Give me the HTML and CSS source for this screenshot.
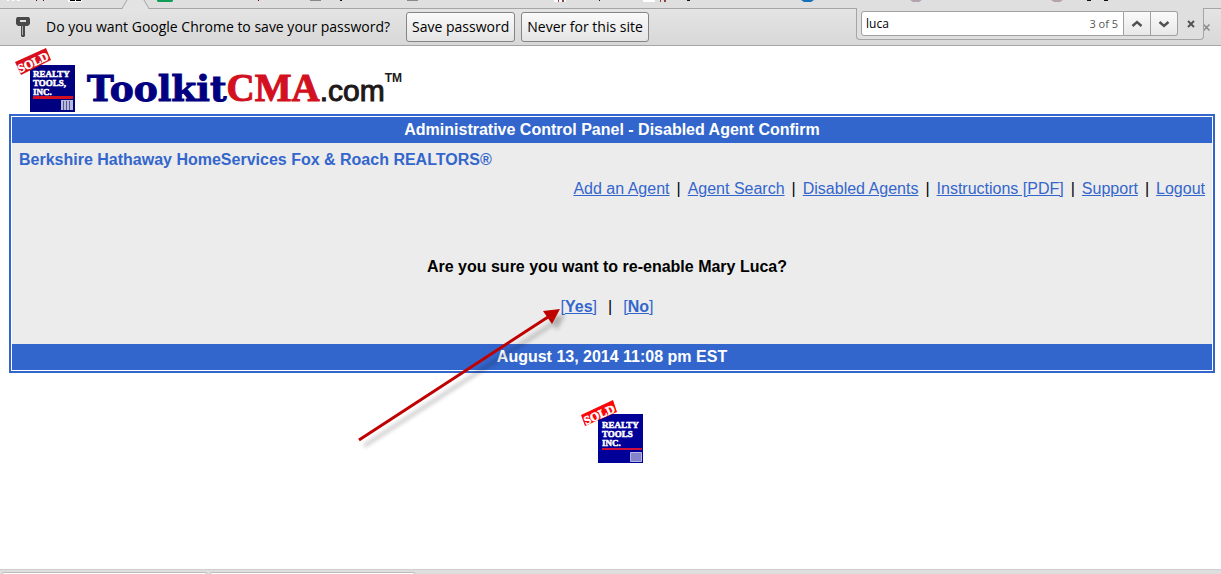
FILE: index.html
```html
<!DOCTYPE html>
<html lang="en">
<head>
<meta charset="utf-8">
<title>Administrative Control Panel - Disabled Agent Confirm</title>
<link rel="stylesheet" href="styles.css">
</head>
<body>
<div class="bookmarks">
  <svg class="bookmark-icons" width="1221" height="8" aria-hidden="true">
    <path d="M7 0h2v1H7zM12 0h2v1h-2zM17 0h3v1h-3z" fill="#fff"/>
    <path d="M36 0h1v1h-1zM43 0h1v1h-1zM258 0h1v1h-1z" fill="#603"/>
    <path d="M68 0h14v2H68z" fill="#fff"/><path d="M70 0h5v1h-5zM76 0h5v1h-5z" fill="#000"/>
    <path d="M554 0h12v2h-12zM643 0h12v2h-12z" fill="#fff"/>
    <path d="M340 0h2v1h-2zM599 0h1v1h-1zM687 0h3v1h-3zM1087 0h4v1h-4zM1104 0h4v1h-4z" fill="#111"/>
    <path d="M558 0h1v2h-1zM562 0h2v2h-2zM660 0h1v2h-1zM664 0h2v2h-2z" fill="#844"/>
    <path d="M157 0h16v1l-1 1h-14l-1-1z" fill="#109d58"/>
    <path d="M310 0h11v1h-11zM407 0h11v1h-11z" fill="#888"/>
    <path d="M801 0h13l-3 2h-7z" fill="#1670b8"/>
    <path d="M910 0h12l-3 2h-6zM1051 0h12l-3 2h-6z" fill="#b3a3ae"/>
    <path d="M122 9.500L127 0H143L149 9.500z" fill="#e3e3e3"/>
    <path d="M122 8.500L127 0M144 0l5 8.500" fill="none" stroke="#a5a5a5"/>
  </svg>
</div>
<div class="infobar">
  <svg class="key" width="14" height="20" viewBox="0 0 14 20" aria-hidden="true">
    <path d="M1 0h12l1 2v5l-2 2H9v10l-1 1H6l-1-1V9H2L0 7V2z" fill="#494949"/>
    <path d="M4 3h6v2H4z" fill="#ddd"/><path d="M6 9h1v9H6z" fill="#aaa"/>
  </svg>
  <span class="question">Do you want Google Chrome to save your password?</span>
  <button class="chrome-button" type="button">Save password</button>
  <button class="chrome-button" type="button">Never for this site</button>
  <button class="dismiss" type="button" aria-label="Dismiss"><svg width="7" height="7" viewBox="0 0 7 7"><path d="M.5.5l6 6M6.500.5l-6 6" stroke="#888" stroke-width="1.500"/></svg></button>
</div>
<form class="findbar">
  <label class="find-field"><input class="find-input" type="text" value="luca" aria-label="Find in page"><span class="find-count">3 of 5</span></label>
  <button class="find-step" type="button" aria-label="Previous"><svg width="12" height="8" viewBox="0 0 12 8"><path d="M1.500 6L6 2l4.500 4" fill="none" stroke="#505050" stroke-width="2.400"/></svg></button>
  <button class="find-step find-next" type="button" aria-label="Next"><svg width="12" height="8" viewBox="0 0 12 8"><path d="M1.500 2L6 6l4.500-4" fill="none" stroke="#505050" stroke-width="2.400"/></svg></button>
  <button class="find-close" type="button" aria-label="Close"><svg width="8" height="8" viewBox="0 0 8 8"><path d="M1 1l6 6M7 1L1 7" stroke="#505050" stroke-width="1.800"/></svg></button>
</form>

<header class="brand">
  <svg class="brand-mark" width="64" height="64" viewBox="0 0 64 64" role="img" aria-label="Realty Tools, Inc.">
    <path d="M15 17h45v47H15z" fill="#000080"/>
    <g class="mark-text"><text x="18" y="29">REALTY</text><text x="18" y="38">TOOLS,</text><text x="18" y="47">INC.</text></g>
    <path d="M18 48h40v3H18z" fill="#d21020"/>
    <path d="M46 52h12v10H46z" fill="#b9b9d8"/>
    <path d="M48.500 53v9M51.500 53v9M54.500 53v9" stroke="#5555a0"/>
    <path d="M0 14L31 0l5 12L6 27z" fill="#d8101c"/>
    <text class="sold" x="5" y="25" transform="rotate(-25 5 25)">SOLD</text>
  </svg>
  <div class="wordmark"><span class="toolkit">Toolkit</span><span class="cma">CMA</span><span class="com">.com</span><span class="tm">TM</span></div>
</header>

<main class="panel">
  <h1 class="bar">Administrative Control Panel - Disabled Agent Confirm</h1>
  <div class="content">
    <h2 class="company">Berkshire Hathaway HomeServices Fox &amp; Roach REALTORS®</h2>
    <nav class="menu"><a href="#">Add an Agent</a><span>|</span><a href="#">Agent Search</a><span>|</span><a href="#">Disabled Agents</a><span>|</span><a href="#">Instructions [PDF]</a><span>|</span><a href="#">Support</a><span>|</span><a href="#">Logout</a></nav>
    <p class="confirm">Are you sure you want to re-enable Mary Luca?</p>
    <div class="choices">
      <a href="#">[<b>Yes</b>]</a><span>|</span><a href="#">[<b>No</b>]</a>
      <svg class="arrow" width="216" height="150" viewBox="0 0 216 150" aria-hidden="true">
        <g class="arrow-shadow"><path d="M10 143L200 20" stroke="#000" stroke-width="3"/><path d="M211 12L195 14l8 13z"/></g>
        <path d="M5 137L194 14" stroke="#c00000" stroke-width="3"/><path d="M206 6L189 8l9 13z" fill="#c00000"/>
      </svg>
    </div>
  </div>
  <div class="bar">August 13, 2014 11:08 pm EST</div>
</main>

<footer class="site-footer">
  <svg width="64" height="64" viewBox="0 0 64 64" role="img" aria-label="Realty Tools Inc.">
    <path d="M18 14h45v49H18z" fill="#000099"/>
    <g class="mark-text"><text x="22" y="28">REALTY</text><text x="22" y="37">TOOLS</text><text x="22" y="46">INC.</text></g>
    <path d="M22 48h40v2H22z" fill="#d0103c"/>
    <path d="M50.500 52.500h11v9h-11z" fill="#8484cc" stroke="#b5b5e5"/>
    <path d="M1 15L33 0l4 12L5 26z" fill="#fa0808"/>
    <text class="sold" x="6" y="25" transform="rotate(-24 6 25)">SOLD</text>
  </svg>
</footer>
<div class="shelf"><span class="download"></span><span class="download"></span></div>
</body>
</html>
```
FILE: styles.css
```css
* { box-sizing: border-box; }
body { margin: 0; min-height: 100vh; display: flex; flex-direction: column; position: relative; overflow: hidden; background: #fff; color: #000; font: 16px/20px "Liberation Sans", Arial, sans-serif; }
button { font: inherit; margin: 0; }
svg { display: block; flex: none; }
.bookmarks { height: 8px; background: #dfdfdf; overflow: visible; }
.bookmark-icons { overflow: visible; position: relative; }
.infobar { height: 38px; display: flex; align-items: center; gap: 6px; padding: 0 11px 0 16px; background: linear-gradient(#e4e4e4, #d8d8d8); border-top: 1px solid #a5a5a5; border-bottom: 1px solid #a5a5a5; font: 14px/20px "Open Sans", "Noto Sans", sans-serif; }
.question { margin: 0 11px 0 10px; white-space: nowrap; }
.chrome-button { height: 30px; padding: 0 5px; border: 1px solid #858585; border-radius: 3px; background: linear-gradient(#fafafa, #e4e4e4); white-space: nowrap; color: #000; }
.question + .chrome-button { margin-left: -1px; }
.dismiss { margin-left: auto; padding: 0; border: 0; background: none; }
.findbar { position: absolute; top: 8px; right: 17px; width: 348px; height: 32px; display: flex; align-items: center; padding: 0 8px 0 4px; background: #dfdfdf; border: 1px solid #a5a5a5; border-top: 0; border-radius: 0 0 4px 4px; font: 12px/16px "Open Sans", sans-serif; }
.find-field { flex: 1; display: flex; align-items: center; height: 25px; background: #fff; border: 1px solid #a0a0a0; border-radius: 3px 0 0 3px; padding: 0 5px 0 4px; }
.find-input { flex: 1; min-width: 0; border: 0; padding: 0; outline: 0; font: inherit; background: none; }
.find-count { color: #555; font-size: 11px; }
.find-step { display: grid; place-items: center; width: 27px; height: 25px; padding: 0; border: 1px solid #a0a0a0; border-left: 0; background: linear-gradient(#fafafa, #e8e8e8); }
.find-next { border-radius: 0 3px 3px 0; }
.find-close { padding: 0; margin-left: 9px; border: 0; background: none; }
.brand { display: flex; height: 68px; padding: 2px 15px 0; gap: 8px; }
.wordmark { display: flex; align-items: baseline; line-height: 60px; padding-top: 10px; font-weight: bold; }
.toolkit { color: #000080; font-family: "DejaVu Serif", serif; font-size: 36px; -webkit-text-stroke: 1px #000080; }
.cma { color: #d21020; font-family: "Liberation Serif", serif; font-size: 39px; -webkit-text-stroke: 1px #d21020; }
.com { font: 30px/60px "Liberation Sans", sans-serif; color: #201818; -webkit-text-stroke: 1px #201818; }
.tm { align-self: flex-start; font: bold 12px/40px "Liberation Sans", sans-serif; color: #201818; }
.mark-text { fill: #fff; font: bold 9px "Liberation Serif", serif; stroke: #fff; stroke-width: .5px; }
.sold { fill: #fff; font: bold 12px "Liberation Serif", serif; stroke: #fff; stroke-width: .5px; }
.panel { margin: 0 6px 0 9px; border: 2px solid #3366cc; padding: 1px; }
.bar { margin: 0; padding: 3px 0; background: #3366cc; color: #fff; text-align: center; font-size: 16px; line-height: 20px; font-weight: bold; }
.content { background: #ececec; padding: 7px 7px 27px; }
.company { margin: 0; color: #3366cc; font-size: 16px; line-height: 20px; }
.menu { display: flex; justify-content: flex-end; gap: 7px; margin-top: 9px; }
a { color: #3366cc; }
.confirm { margin: 58px 10px 20px 0; text-align: center; font-weight: bold; }
.choices { position: relative; display: flex; justify-content: center; gap: 11px; margin-right: 10px; }
.arrow { position: absolute; top: 6px; right: calc(50% + 37px); z-index: 1; }
.arrow-shadow { opacity: .25; filter: blur(2px); }
.site-footer { display: flex; justify-content: center; padding: 27px 0 0 2px; }
.shelf { margin-top: auto; height: 5px; display: flex; gap: 3px; padding: 2px 2px 0; background: #dedede; border-top: 1px solid #cfcfcf; }
.download { width: 205px; border: 1px solid #bdbdbd; border-bottom: 0; border-radius: 3px 3px 0 0; background: #fff; }
```
